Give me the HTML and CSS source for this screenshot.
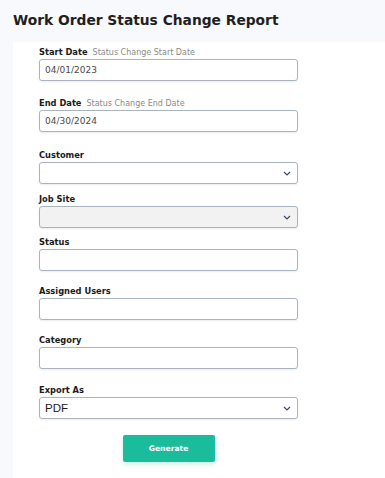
FILE: index.html
```html
<!DOCTYPE html>
<html>
<head>
<meta charset="utf-8">
<link rel="stylesheet" href="styles.css">
</head>
<body>
<div class="page">
  <h1 class="title">Work Order Status Change Report</h1>
  <div class="card">
    <form class="form">
      <div class="field m16">
        <div class="label"><span class="lbl">Start Date</span><span class="hint">Status Change Start Date</span></div>
        <div class="input">04/01/2023</div>
      </div>
      <div class="field m17">
        <div class="label"><span class="lbl">End Date</span><span class="hint">Status Change End Date</span></div>
        <div class="input">04/30/2024</div>
      </div>
      <div class="field m9">
        <div class="label"><span class="lbl">Customer</span></div>
        <div class="input select"><span></span><svg class="chev" width="8" height="5" viewBox="0 0 8 5"><path d="M1 1 L4 4 L7 1" fill="none" stroke="#3a4a6a" stroke-width="1.2"/></svg></div>
      </div>
      <div class="field m8">
        <div class="label"><span class="lbl">Job Site</span></div>
        <div class="input select disabled"><span></span><svg class="chev" width="8" height="5" viewBox="0 0 8 5"><path d="M1 1 L4 4 L7 1" fill="none" stroke="#3a4a6a" stroke-width="1.2"/></svg></div>
      </div>
      <div class="field m14">
        <div class="label"><span class="lbl">Status</span></div>
        <div class="input"></div>
      </div>
      <div class="field m14">
        <div class="label"><span class="lbl">Assigned Users</span></div>
        <div class="input"></div>
      </div>
      <div class="field m15">
        <div class="label"><span class="lbl">Category</span></div>
        <div class="input"></div>
      </div>
      <div class="field m16">
        <div class="label"><span class="lbl">Export As</span></div>
        <div class="input select pdf"><span>PDF</span><svg class="chev" width="8" height="5" viewBox="0 0 8 5"><path d="M1 1 L4 4 L7 1" fill="none" stroke="#3a4a6a" stroke-width="1.2"/></svg></div>
      </div>
      <div class="actions">
        <button type="button" class="btn">Generate</button>
      </div>
    </form>
  </div>
</div>
</body>
</html>
```
FILE: styles.css
```css
html, body {
  margin: 0;
  padding: 0;
  background: #f8f9fc;
  font-family: "DejaVu Sans", sans-serif;
}
.page {
  padding-left: 13px;
}
.title {
  margin: 0;
  height: 42px;
  line-height: 40px;
  font-size: 13.8px;
  font-weight: 600;
  color: #1f1f1f;
  letter-spacing: 0;
}
.card {
  background: #fff;
  height: 436px;
  padding: 4px 0 0 26px;
  box-sizing: border-box;
}
.form {
  width: 259px;
  display: flex;
  flex-direction: column;
}
.m8 { margin-bottom: 8px; }
.m9 { margin-bottom: 9px; }
.m14 { margin-bottom: 14px; }
.m15 { margin-bottom: 15px; }
.m16 { margin-bottom: 16px; }
.m17 { margin-bottom: 17px; }
.label {
  display: flex;
  align-items: baseline;
  gap: 5px;
  height: 13px;
  line-height: 13px;
}
.lbl {
  font-size: 8.3px;
  font-weight: bold;
  color: #1a1a1a;
}
.hint {
  font-size: 8px;
  color: #8a8a8a;
}
.input {
  height: 22px;
  box-sizing: border-box;
  border: 1px solid #aab4be;
  border-radius: 3px;
  background: #fff;
  box-shadow: 0 1px 2px rgba(0,0,0,0.08);
  padding: 0 5px;
  font-size: 9px;
  line-height: 20px;
  color: #4a4a4a;
}
.select {
  display: flex;
  justify-content: space-between;
  align-items: center;
  padding-right: 6px;
}
.select.disabled {
  background: #f2f2f2;
}
.pdf {
  font-family: "Liberation Sans", sans-serif;
  font-size: 11.5px;
  color: #1a1a1a;
}
.chev {
  display: block;
}
.actions {
  display: flex;
  justify-content: center;
}
.btn {
  width: 92px;
  height: 27px;
  border: none;
  border-radius: 2px;
  background: #1abc9c;
  color: #fff;
  font-family: "DejaVu Sans", sans-serif;
  font-size: 7.6px;
  font-weight: 600;
  box-shadow: 0 2px 5px rgba(26,188,156,0.25);
}
```
